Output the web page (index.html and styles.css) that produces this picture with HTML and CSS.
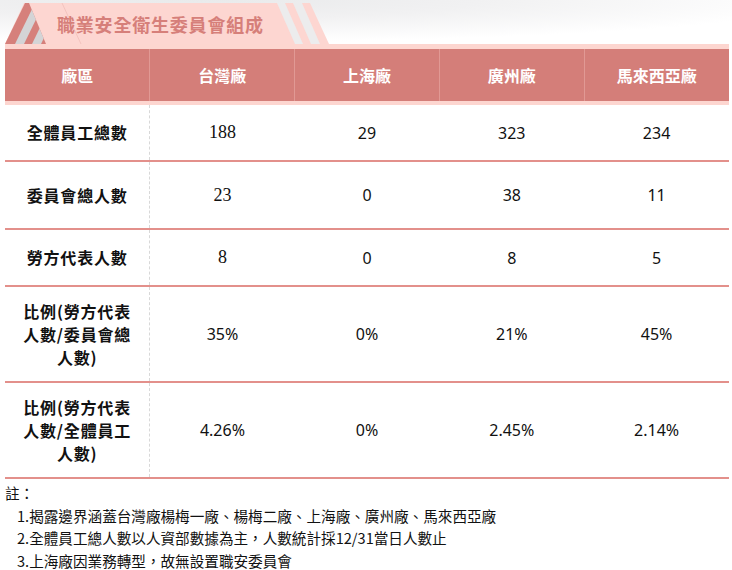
FILE: index.html
```html
<!DOCTYPE html>
<html lang="zh-Hant">
<head>
<meta charset="utf-8">
<title>職業安全衛生委員會組成</title>
<link rel="stylesheet" href="styles.css">
</head>
<body>
<div class="page">
  <div class="topbar">
    <div class="tab">
      <svg class="tab-bg" width="335" height="44" viewBox="0 0 335 44" aria-hidden="true">
        <defs>
          <clipPath id="tri"><polygon points="5,44 25,3 29,3 46,44"/></clipPath>
        </defs>
        <polygon points="5,44 24,3 310,3 329,44" fill="#fdd6d1"/>
        <line x1="62" y1="3" x2="81" y2="44" stroke="#f3c3be" stroke-width="1"/>
        <polygon points="5,44 25,3 29,3 46,44" fill="#d6807b"/>
        <g clip-path="url(#tri)" fill="#d4d4d6">
          <polygon points="15,44 24,44 44,3 35,3"/>
          <polygon points="32,44 41,44 61,3 52,3"/>
        </g>
        <polygon points="277,3 285,3 303,44 295,44" fill="#ececed"/>
        <polygon points="293,3 302,3 320,44 311,44" fill="#ececed"/>
      </svg>
      <h1 class="tab-title">職業安全衛生委員會組成</h1>
    </div>
  </div>

  <table class="grid">
    <thead>
      <tr>
        <th>廠區</th>
        <th>台灣廠</th>
        <th>上海廠</th>
        <th>廣州廠</th>
        <th>馬來西亞廠</th>
      </tr>
    </thead>
    <tbody>
      <tr class="r1">
        <td class="label">全體員工總數</td>
        <td class="serif">188</td>
        <td>29</td>
        <td>323</td>
        <td>234</td>
      </tr>
      <tr class="r2">
        <td class="label">委員會總人數</td>
        <td class="serif">23</td>
        <td>0</td>
        <td>38</td>
        <td>11</td>
      </tr>
      <tr class="r3">
        <td class="label">勞方代表人數</td>
        <td class="serif">8</td>
        <td>0</td>
        <td>8</td>
        <td>5</td>
      </tr>
      <tr class="r4">
        <td class="label">比例(勞方代表<br>人數/委員會總<br>人數)</td>
        <td>35%</td>
        <td>0%</td>
        <td>21%</td>
        <td>45%</td>
      </tr>
      <tr class="r5">
        <td class="label">比例(勞方代表<br>人數/全體員工<br>人數)</td>
        <td>4.26%</td>
        <td>0%</td>
        <td>2.45%</td>
        <td>2.14%</td>
      </tr>
    </tbody>
  </table>

  <div class="notes">
    <p class="note-head">註：</p>
    <ol class="note-list">
      <li>1.揭露邊界涵蓋台灣廠楊梅一廠、楊梅二廠、上海廠、廣州廠、馬來西亞廠</li>
      <li>2.全體員工總人數以人資部數據為主，人數統計採12/31當日人數止</li>
      <li>3.上海廠因業務轉型，故無設置職安委員會</li>
    </ol>
  </div>
</div>
</body>
</html>
```

FILE: styles.css
```css
html, body {
  margin: 0;
  padding: 0;
  background: #ffffff;
}

body {
  font-family: "Noto Sans CJK TC", "Noto Sans", sans-serif;
  color: #111111;
}

.page {
  width: 732px;
}

.topbar {
  height: 44px;
  background:
    radial-gradient(ellipse 620px 42px at 200px 0px, #e9eaeb 0%, #f1f1f2 45%, rgba(255,255,255,0) 100%),
    #ffffff;
}

.tab {
  position: relative;
  width: 335px;
  height: 44px;
}

.tab-bg {
  position: absolute;
  left: 0;
  top: 0;
  display: block;
}

.tab-title {
  position: relative;
  margin: 0;
  padding: 6px 0 0 57px;
  font-size: 18px;
  line-height: 36px;
  font-weight: 700;
  color: #d67f7a;
  letter-spacing: 0.8px;
}

.grid {
  margin-left: 5px;
  width: 724px;
  border-collapse: collapse;
  table-layout: fixed;
}

.grid th {
  height: 52px;
  padding: 0;
  background: #d47e79;
  color: #ffffff;
  font-size: 16px;
  font-weight: 700;
  text-align: center;
  vertical-align: middle;
  border-top: 5px solid #fdd6d0;
  border-bottom: 4px solid #fdd6d0;
  border-left: 1px solid #e19994;
}

.grid th:first-child {
  border-left: none;
}

.grid td {
  padding: 0;
  text-align: center;
  vertical-align: middle;
  font-family: "Noto Sans", "Noto Sans CJK TC", sans-serif;
  font-size: 16px;
  color: #111111;
  border-bottom: 2px solid #e3908b;
}

.grid td.label {
  font-family: "Noto Sans CJK TC", sans-serif;
  font-weight: 700;
  font-size: 16px;
  letter-spacing: 0.8px;
  line-height: 23px;
  border-right: 1px dashed #d8d8d8;
}

.grid td.serif {
  font-family: "Liberation Serif", serif;
  font-size: 18px;
}

.r1 { height: 58px; }
.r2 { height: 68px; }
.r3 { height: 57px; }
.r4 { height: 96px; }
.r5 { height: 96px; }

.notes {
  padding: 3px 0 0 5px;
  font-family: "Noto Sans CJK TC", sans-serif;
  font-size: 14.6px;
  line-height: 22.5px;
  color: #111111;
}

.note-head {
  margin: 0;
}

.note-list {
  list-style: none;
  margin: 0;
  padding: 0 0 0 12px;
}
```
